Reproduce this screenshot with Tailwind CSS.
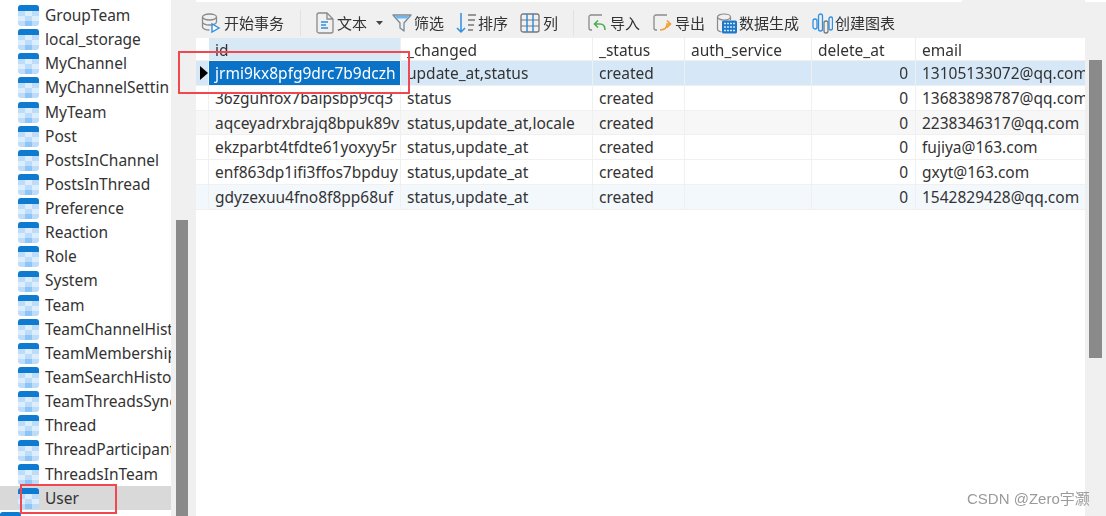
<!DOCTYPE html>
<html lang="en">

<head>
    <meta charset="UTF-8">
    <title>User table</title>
    <script src="https://cdn.jsdelivr.net/npm/@tailwindcss/browser@4"></script>
</head>

<body class="w-[1106px] h-[516px] overflow-hidden bg-[#f0f0f0] font-['Noto_Sans','Noto_Sans_CJK_SC',sans-serif] text-[15.5px] text-[#333]">
    <svg class="hidden">
        <symbol id="tbl" viewBox="0 0 21 21">
            <rect x="0" y="0" width="21" height="21" rx="3" fill="#bcdcfa"/>
            <rect x="7" y="6" width="7" height="5" fill="#dcedfd"/>
            <rect x="0" y="11" width="7" height="5" fill="#dcedfd"/>
            <rect x="14" y="11" width="7" height="5" fill="#dcedfd"/>
            <rect x="7" y="16" width="7" height="5" fill="#8fc6f7"/>
            <path d="M0 6V3a3 3 0 0 1 3-3h15a3 3 0 0 1 3 3v3z" fill="#0f7bd0"/>
        </symbol>
    </svg>

    <div class="relative flex h-[516px] blur-[0.3px]">
        <!-- left tree -->
        <div class="w-[171px] h-[516px] shrink-0 bg-white pt-[3.5px] overflow-hidden">
            <div class="flex items-center h-[24.15px] pl-[18px] gap-[6px]"><svg class="w-[21px] h-[21px] shrink-0"><use href="#tbl"/></svg><span class="whitespace-nowrap">GroupTeam</span></div>
            <div class="flex items-center h-[24.15px] pl-[18px] gap-[6px]"><svg class="w-[21px] h-[21px] shrink-0"><use href="#tbl"/></svg><span class="whitespace-nowrap">local_storage</span></div>
            <div class="flex items-center h-[24.15px] pl-[18px] gap-[6px]"><svg class="w-[21px] h-[21px] shrink-0"><use href="#tbl"/></svg><span class="whitespace-nowrap">MyChannel</span></div>
            <div class="flex items-center h-[24.15px] pl-[18px] gap-[6px]"><svg class="w-[21px] h-[21px] shrink-0"><use href="#tbl"/></svg><span class="whitespace-nowrap">MyChannelSettin</span></div>
            <div class="flex items-center h-[24.15px] pl-[18px] gap-[6px]"><svg class="w-[21px] h-[21px] shrink-0"><use href="#tbl"/></svg><span class="whitespace-nowrap">MyTeam</span></div>
            <div class="flex items-center h-[24.15px] pl-[18px] gap-[6px]"><svg class="w-[21px] h-[21px] shrink-0"><use href="#tbl"/></svg><span class="whitespace-nowrap">Post</span></div>
            <div class="flex items-center h-[24.15px] pl-[18px] gap-[6px]"><svg class="w-[21px] h-[21px] shrink-0"><use href="#tbl"/></svg><span class="whitespace-nowrap">PostsInChannel</span></div>
            <div class="flex items-center h-[24.15px] pl-[18px] gap-[6px]"><svg class="w-[21px] h-[21px] shrink-0"><use href="#tbl"/></svg><span class="whitespace-nowrap">PostsInThread</span></div>
            <div class="flex items-center h-[24.15px] pl-[18px] gap-[6px]"><svg class="w-[21px] h-[21px] shrink-0"><use href="#tbl"/></svg><span class="whitespace-nowrap">Preference</span></div>
            <div class="flex items-center h-[24.15px] pl-[18px] gap-[6px]"><svg class="w-[21px] h-[21px] shrink-0"><use href="#tbl"/></svg><span class="whitespace-nowrap">Reaction</span></div>
            <div class="flex items-center h-[24.15px] pl-[18px] gap-[6px]"><svg class="w-[21px] h-[21px] shrink-0"><use href="#tbl"/></svg><span class="whitespace-nowrap">Role</span></div>
            <div class="flex items-center h-[24.15px] pl-[18px] gap-[6px]"><svg class="w-[21px] h-[21px] shrink-0"><use href="#tbl"/></svg><span class="whitespace-nowrap">System</span></div>
            <div class="flex items-center h-[24.15px] pl-[18px] gap-[6px]"><svg class="w-[21px] h-[21px] shrink-0"><use href="#tbl"/></svg><span class="whitespace-nowrap">Team</span></div>
            <div class="flex items-center h-[24.15px] pl-[18px] gap-[6px]"><svg class="w-[21px] h-[21px] shrink-0"><use href="#tbl"/></svg><span class="whitespace-nowrap">TeamChannelHist</span></div>
            <div class="flex items-center h-[24.15px] pl-[18px] gap-[6px]"><svg class="w-[21px] h-[21px] shrink-0"><use href="#tbl"/></svg><span class="whitespace-nowrap">TeamMembership</span></div>
            <div class="flex items-center h-[24.15px] pl-[18px] gap-[6px]"><svg class="w-[21px] h-[21px] shrink-0"><use href="#tbl"/></svg><span class="whitespace-nowrap">TeamSearchHisto</span></div>
            <div class="flex items-center h-[24.15px] pl-[18px] gap-[6px]"><svg class="w-[21px] h-[21px] shrink-0"><use href="#tbl"/></svg><span class="whitespace-nowrap">TeamThreadsSync</span></div>
            <div class="flex items-center h-[24.15px] pl-[18px] gap-[6px]"><svg class="w-[21px] h-[21px] shrink-0"><use href="#tbl"/></svg><span class="whitespace-nowrap">Thread</span></div>
            <div class="flex items-center h-[24.15px] pl-[18px] gap-[6px]"><svg class="w-[21px] h-[21px] shrink-0"><use href="#tbl"/></svg><span class="whitespace-nowrap">ThreadParticipant</span></div>
            <div class="flex items-center h-[24.15px] pl-[18px] gap-[6px]"><svg class="w-[21px] h-[21px] shrink-0"><use href="#tbl"/></svg><span class="whitespace-nowrap">ThreadsInTeam</span></div>
            <div class="flex items-center h-[24.15px] pl-[18px] gap-[6px] bg-[#d9d9d9]"><svg class="w-[21px] h-[21px] shrink-0"><use href="#tbl"/></svg><span class="whitespace-nowrap">User</span></div>
            <div class="flex items-center h-[24.15px] gap-[6px]"><svg class="w-[21px] h-[21px] shrink-0"><use href="#tbl"/></svg></div>
        </div>

        <!-- tree scrollbar -->
        <div class="w-[25px] shrink-0 pl-[5px] pt-[220px]">
            <div class="w-[12px] h-[296px] bg-[#8a8a8a]"></div>
        </div>

        <!-- right pane -->
        <div class="w-[910px] shrink-0">
            <div class="flex h-[2px]">
                <div class="w-[766px] bg-white"></div>
                <div class="w-[123px]"></div>
                <div class="w-[21px] bg-white"></div>
            </div>
            <!-- toolbar -->
            <div class="flex items-center h-[36px] pt-[6px] pl-[5px] whitespace-nowrap text-[15px]">
                <svg class="w-[20px] h-[20px] mr-[3px]" viewBox="0 0 20 20" fill="none"><ellipse cx="8.5" cy="4" rx="7" ry="3" stroke="#8a8a8a" stroke-width="1.3"/><path d="M1.5 4v10c0 1.6 3 3 7 3M15.5 4v5M1.5 9c0 1.6 3 3 7 3s7-1.4 7-3" stroke="#8a8a8a" stroke-width="1.3"/><path d="M11 11v8l7-4z" fill="#fff" stroke="#2f8fe0" stroke-width="1.4"/></svg>
                <span class="w-[61px]">开始事务</span>
                <div class="w-px h-[26px] bg-[#e2e2e2] ml-[15px] mr-[14px]"></div>
                <svg class="w-[19px] h-[22px] mr-[3px]" viewBox="0 0 19 22" fill="none"><path d="M2 3a2 2 0 0 1 2-2h8l6 6v12a2 2 0 0 1-2 2H4a2 2 0 0 1-2-2z" stroke="#8a8a8a" stroke-width="1.3"/><path d="M12 1v6h6" stroke="#8a8a8a" stroke-width="1.3"/><path d="M6 10h7M6 13h5M6 16h7" stroke="#2f8fe0" stroke-width="1.6"/></svg>
                <span class="w-[31px]">文本</span>
                <svg class="w-[7px] h-[4px] ml-[8px] mr-[8px]" viewBox="0 0 7 4"><path d="M0 0h7L3.5 4z" fill="#444"/></svg>
                <svg class="w-[20px] h-[20px] mr-[2px] ml-px" viewBox="0 0 20 20" fill="none"><path d="M1 2h18l-7 8v8l-4-3v-5z" stroke="#7a8a96" stroke-width="1.3" stroke-linejoin="round"/><path d="M3 3h14l-2 2.5H5z" fill="#6db7ef"/></svg>
                <span class="w-[31px]">筛选</span>
                <svg class="w-[21px] h-[22px] ml-[11px]" viewBox="0 0 21 22" fill="none"><path d="M5 1v19M1 16l4 4 4-4" stroke="#2f8fe0" stroke-width="1.5"/><path d="M12 3h8M12 8h7M12 13h6M12 18h5" stroke="#777" stroke-width="1.3"/></svg>
                <span class="w-[31px] ml-px">排序</span>
                <svg class="w-[20px] h-[20px] ml-[11px] mr-[3px]" viewBox="0 0 20 20" fill="none"><rect x="1" y="1" width="18" height="18" rx="2" stroke="#777" stroke-width="1.3"/><path d="M7 1v18M13 1v18" stroke="#2f8fe0" stroke-width="1.5"/><path d="M1 7h18M1 13h18" stroke="#777" stroke-width="1.1"/></svg>
                <span class="w-[16px]">列</span>
                <div class="w-px h-[26px] bg-[#e2e2e2] ml-[14px] mr-[13px]"></div>
                <svg class="w-[20px] h-[20px] mr-[3px]" viewBox="0 0 20 20" fill="none"><path d="M15 2H4a2 2 0 0 0-2 2v11a2 2 0 0 0 2 2h1" stroke="#8a8a8a" stroke-width="1.3"/><path d="M18 17c0-4-2-6-5-6H8M11 7.5 7.5 11l3.5 3.5" stroke="#4caf50" stroke-width="1.6"/></svg>
                <span class="w-[31px]">导入</span>
                <svg class="w-[20px] h-[20px] ml-[11px] mr-[3px]" viewBox="0 0 20 20" fill="none"><path d="M15 2H4a2 2 0 0 0-2 2v11a2 2 0 0 0 2 2h1" stroke="#8a8a8a" stroke-width="1.3"/><path d="M8 17c4 0 7-1 7-6h3M15 7.5l3.5 3.5-3.5 3.5" stroke="#f0a030" stroke-width="1.6"/></svg>
                <span class="w-[31px]">导出</span>
                <svg class="w-[21px] h-[21px] ml-[10px] mr-[2px]" viewBox="0 0 21 21" fill="none"><ellipse cx="8" cy="4" rx="6.5" ry="3" stroke="#8a8a8a" stroke-width="1.2"/><path d="M1.5 4v12c0 1.5 2 2.5 4 3M14.5 4v3" stroke="#8a8a8a" stroke-width="1.2"/><rect x="6" y="7.5" width="15" height="13" rx="1.5" fill="#1e78c8"/><path d="M8 10.5h11M8 14h11M8 17.5h11" stroke="#cfe6fa" stroke-width="1.5" stroke-dasharray="2 1"/></svg>
                <span class="w-[62px]">数据生成</span>
                <svg class="w-[21px] h-[21px] ml-[11px] mr-[2px]" viewBox="0 0 21 21" fill="none"><rect x="1" y="6" width="4" height="10" rx="2" stroke="#2f8fe0" stroke-width="1.3"/><rect x="6.5" y="1" width="4" height="17" rx="2" stroke="#2f8fe0" stroke-width="1.3"/><rect x="12" y="8" width="4" height="12" rx="2" stroke="#777" stroke-width="1.3"/><rect x="17" y="4" width="3.5" height="13" rx="1.7" stroke="#2f8fe0" stroke-width="1.3"/></svg>
                <span class="w-[62px]">创建图表</span>
            </div>

            <!-- grid -->
            <div class="w-[889px] h-[478px] bg-white overflow-hidden">
                <div class="flex h-[23px] leading-[24px] border-b border-[#f0f0f0]">
                    <div class="w-[13px] shrink-0"></div>
                    <div class="w-[192px] pl-[6px] bg-[#d9e8f5] border-r border-[#eeeeee]">id</div>
                    <div class="w-[192px] pl-[6px] border-r border-[#eeeeee]">_changed</div>
                    <div class="w-[92px] pl-[6px] border-r border-[#eeeeee]">_status</div>
                    <div class="w-[127px] pl-[6px] border-r border-[#eeeeee]">auth_service</div>
                    <div class="w-[104px] pl-[6px] border-r border-[#eeeeee]">delete_at</div>
                    <div class="w-[169px] pl-[6px]">email</div>
                </div>
                <div class="flex h-[24.8px] leading-[24px] bg-[#d6e7f7] whitespace-nowrap border-b border-[#f0f0f0]">
                    <div class="w-[13px] shrink-0 pl-[4px] flex items-center border-r border-[#f0f0f0]"><div class="w-0 h-0 border-y-[7px] border-y-transparent border-l-[8px] border-l-black"></div></div>
                    <div class="w-[192px] pl-[6px] bg-[#0a73c7] text-white overflow-hidden shrink-0 border-r border-[#f0f0f0]">jrmi9kx8pfg9drc7b9dczh</div>
                    <div class="w-[192px] pl-[6px] overflow-hidden shrink-0 border-r border-[#f0f0f0]">update_at,status</div>
                    <div class="w-[92px] pl-[6px] overflow-hidden shrink-0 border-r border-[#f0f0f0]">created</div>
                    <div class="w-[127px] pl-[6px] overflow-hidden shrink-0 border-r border-[#f0f0f0]"></div>
                    <div class="w-[104px] pr-[7px] text-right overflow-hidden shrink-0 border-r border-[#f0f0f0]">0</div>
                    <div class="w-[169px] pl-[6px] overflow-hidden shrink-0">13105133072@qq.com</div>
                </div>
                <div class="flex h-[24.8px] leading-[24px] bg-white whitespace-nowrap border-b border-[#f0f0f0]">
                    <div class="w-[13px] shrink-0 border-r border-[#f0f0f0]"></div>
                    <div class="w-[192px] pl-[6px] overflow-hidden shrink-0 border-r border-[#f0f0f0]">36zguhfox7baipsbp9cq3</div>
                    <div class="w-[192px] pl-[6px] overflow-hidden shrink-0 border-r border-[#f0f0f0]">status</div>
                    <div class="w-[92px] pl-[6px] overflow-hidden shrink-0 border-r border-[#f0f0f0]">created</div>
                    <div class="w-[127px] pl-[6px] overflow-hidden shrink-0 border-r border-[#f0f0f0]"></div>
                    <div class="w-[104px] pr-[7px] text-right overflow-hidden shrink-0 border-r border-[#f0f0f0]">0</div>
                    <div class="w-[169px] pl-[6px] overflow-hidden shrink-0">13683898787@qq.com</div>
                </div>
                <div class="flex h-[24.8px] leading-[24px] bg-[#f7f7f7] whitespace-nowrap border-b border-[#f0f0f0]">
                    <div class="w-[13px] shrink-0 border-r border-[#f0f0f0]"></div>
                    <div class="w-[192px] pl-[6px] overflow-hidden shrink-0 border-r border-[#f0f0f0]">aqceyadrxbrajq8bpuk89v</div>
                    <div class="w-[192px] pl-[6px] overflow-hidden shrink-0 border-r border-[#f0f0f0]">status,update_at,locale</div>
                    <div class="w-[92px] pl-[6px] overflow-hidden shrink-0 border-r border-[#f0f0f0]">created</div>
                    <div class="w-[127px] pl-[6px] overflow-hidden shrink-0 border-r border-[#f0f0f0]"></div>
                    <div class="w-[104px] pr-[7px] text-right overflow-hidden shrink-0 border-r border-[#f0f0f0]">0</div>
                    <div class="w-[169px] pl-[6px] overflow-hidden shrink-0">2238346317@qq.com</div>
                </div>
                <div class="flex h-[24.8px] leading-[24px] bg-white whitespace-nowrap border-b border-[#f0f0f0]">
                    <div class="w-[13px] shrink-0 border-r border-[#f0f0f0]"></div>
                    <div class="w-[192px] pl-[6px] overflow-hidden shrink-0 border-r border-[#f0f0f0]">ekzparbt4tfdte61yoxyy5r</div>
                    <div class="w-[192px] pl-[6px] overflow-hidden shrink-0 border-r border-[#f0f0f0]">status,update_at</div>
                    <div class="w-[92px] pl-[6px] overflow-hidden shrink-0 border-r border-[#f0f0f0]">created</div>
                    <div class="w-[127px] pl-[6px] overflow-hidden shrink-0 border-r border-[#f0f0f0]"></div>
                    <div class="w-[104px] pr-[7px] text-right overflow-hidden shrink-0 border-r border-[#f0f0f0]">0</div>
                    <div class="w-[169px] pl-[6px] overflow-hidden shrink-0">fujiya@163.com</div>
                </div>
                <div class="flex h-[24.8px] leading-[24px] bg-white whitespace-nowrap border-b border-[#f0f0f0]">
                    <div class="w-[13px] shrink-0 border-r border-[#f0f0f0]"></div>
                    <div class="w-[192px] pl-[6px] overflow-hidden shrink-0 border-r border-[#f0f0f0]">enf863dp1ifi3ffos7bpduy</div>
                    <div class="w-[192px] pl-[6px] overflow-hidden shrink-0 border-r border-[#f0f0f0]">status,update_at</div>
                    <div class="w-[92px] pl-[6px] overflow-hidden shrink-0 border-r border-[#f0f0f0]">created</div>
                    <div class="w-[127px] pl-[6px] overflow-hidden shrink-0 border-r border-[#f0f0f0]"></div>
                    <div class="w-[104px] pr-[7px] text-right overflow-hidden shrink-0 border-r border-[#f0f0f0]">0</div>
                    <div class="w-[169px] pl-[6px] overflow-hidden shrink-0">gxyt@163.com</div>
                </div>
                <div class="flex h-[24.8px] leading-[24px] bg-[#f3f8fd] whitespace-nowrap border-b border-[#f0f0f0]">
                    <div class="w-[13px] shrink-0 border-r border-[#f0f0f0]"></div>
                    <div class="w-[192px] pl-[6px] overflow-hidden shrink-0 border-r border-[#f0f0f0]">gdyzexuu4fno8f8pp68uf</div>
                    <div class="w-[192px] pl-[6px] overflow-hidden shrink-0 border-r border-[#f0f0f0]">status,update_at</div>
                    <div class="w-[92px] pl-[6px] overflow-hidden shrink-0 border-r border-[#f0f0f0]">created</div>
                    <div class="w-[127px] pl-[6px] overflow-hidden shrink-0 border-r border-[#f0f0f0]"></div>
                    <div class="w-[104px] pr-[7px] text-right overflow-hidden shrink-0 border-r border-[#f0f0f0]">0</div>
                    <div class="w-[169px] pl-[6px] overflow-hidden shrink-0">1542829428@qq.com</div>
                </div>
            </div>
        </div>

        <!-- grid scrollbar -->
        <div class="absolute left-[1089px] top-[60px] w-[13px] h-[298px] bg-[#8a8a8a]"></div>

        <!-- annotations -->
        <div class="absolute left-[178px] top-[51px] w-[232px] h-[43px] border-2 border-[#f0484e]"></div>
        <div class="absolute left-[20px] top-[484px] w-[97px] h-[30px] border-2 border-[#f0484e]"></div>
        <div class="absolute left-[967px] top-[490px] text-[15px] leading-[18px] text-[#9a9a9a] whitespace-nowrap font-['Liberation_Sans','Noto_Sans_CJK_SC',sans-serif]">CSDN @Zero宇灏</div>
    </div>
</body>

</html>
